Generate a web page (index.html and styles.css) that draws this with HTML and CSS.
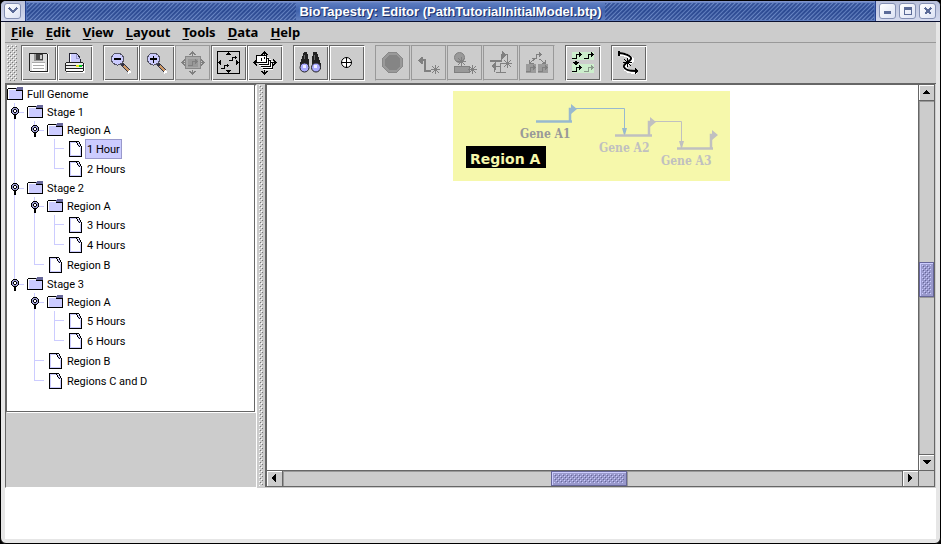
FILE: index.html
```html
<!DOCTYPE html>
<html lang="en">
<head>
<meta charset="utf-8">
<title>BioTapestry: Editor</title>
<link rel="stylesheet" href="styles.css">
</head>
<body>
<svg class="defs" aria-hidden="true">
  <defs>
    <pattern id="bumps" width="4" height="4" patternUnits="userSpaceOnUse">
      <path fill="#fff" d="M0 0h1v1H0zM2 2h1v1H2z"/><path fill="#777" d="M1 1h1v1H1zM3 3h1v1H3z"/>
    </pattern>
    <pattern id="thumb-bumps" width="4" height="4" patternUnits="userSpaceOnUse">
      <path fill="#ccf" d="M0 0h1v1H0zM2 2h1v1H2z"/><path fill="#669" d="M1 1h1v1H1zM3 3h1v1H3z"/>
    </pattern>
    <symbol id="folder" viewBox="0 0 16 14">
      <path fill="#669" d="M10 0h6v3H9V1h1z"/>
      <path fill="#000" d="M1 1h8v1H1zM0 2h1v11H0zM9 3h7v10h-1V4H9zM0 12h16v1H0z"/>
      <path fill="#ccf" d="M2 3h7v1h6v8H2z"/><path fill="#fff" d="M1 2h8v1H2v9H1z"/>
    </symbol>
    <symbol id="file" viewBox="0 0 13 16">
      <path fill="#fff" d="M1 1h7l4 5v9H1z"/>
      <path fill="none" stroke="#ccf" d="M1.500 14.500V1.500H7M2 14.500h9.500V7"/>
      <path fill="#000" d="M0 0h8v1H1v14h11V6h1v10H0z"/>
      <path fill="#ccf" d="M8 1h1v1h1v1h1v1h1v2H9V3H8z"/>
      <path fill="#000" d="M7 1h1v1H7zM8 2h1v2H8zM9 4h1v1H9zM10 5h1v1h-1zM8 0h2v1H8zM10 1h1v2h-1zM11 3h1v2h-1zM12 5h1v2h-1z"/>
    </symbol>
    <symbol id="handle" viewBox="0 0 8 12">
      <path fill="#000" d="M2 0h4v1h1v1h1v4H7v1H6v1H5v4H3V8H2V7H1V6H0V2h1V1h1z"/>
      <path fill="#99c" d="M2 1h4v1h1v4H6v1H2V6H1V2h1z"/><path fill="#000" d="M3 2h2v1h1v2H5v1H3V5H2V3h1z"/><path fill="#fff" d="M3 3h2v2H3z"/>
    </symbol>
    <symbol id="star" viewBox="0 0 9 9">
      <path fill="currentColor" d="M4 0h1v9H4zM0 4h9v1H0zM3 3h3v3H3zM1 1h1v1H1zM2 2h1v1H2zM6 6h1v1H6zM7 7h1v1H7zM7 1h1v1H7zM6 2h1v1H6zM2 6h1v1H2zM1 7h1v1H1z"/>
    </symbol>
    <symbol id="gene" viewBox="0 0 10 8">
      <path fill="currentColor" d="M0 6h4V2h3V0h1v1h1v1h1v1H9v1H8v1H7V3H5v4H0z"/>
    </symbol>
    <symbol id="tips" viewBox="0 0 24 24">
      <path fill="currentColor" d="M11 0h1v1h1v1h1v1h1v1h-2V3h-1v2h-1V3h-1v1H8V3h1V2h1V1h1zM11 24h1v-1h1v-1h1v-1h1v-1h-2v1h-1v-2h-1v2h-1v-1H8v1h1v1h1v1h1zM0 11v1h1v1h1v1h1v1h1v-2H3v-1h2v-1H3v-1h1V8H3v1H2v1H1v1zM24 11v1h-1v1h-1v1h-1v1h-1v-2h1v-1h-2v-1h2v-1h-1V8h1v1h1v1h1v1z"/>
    </symbol>
    <symbol id="lens" viewBox="0 0 24 24">
      <path stroke="#fff" stroke-width="3" d="M15 15l6 7"/>
      <path stroke="#334" stroke-width="4" d="M13 13l7 7"/>
      <path stroke="#c96" stroke-width="2" d="M15 15l5 5"/>
      <circle cx="8.500" cy="8" r="6" fill="#ccf" stroke="#556"/>
    </symbol>
  </defs>
</svg>
<div class="window">
  <header class="titlebar">
    <div class="corner"><button class="win-btn" aria-label="Window menu"><svg width="10" height="8"><path d="M1 1l4 4 4-4" fill="none" stroke="#5b6b98" stroke-width="2"/></svg></button></div>
    <div class="hatch"></div>
    <h1 class="title">BioTapestry: Editor (PathTutorialInitialModel.btp)</h1>
    <div class="hatch"></div>
    <div class="corner">
      <button class="win-btn" aria-label="Minimize"><svg width="10" height="8"><path fill="#5b6b98" d="M1 4h7v3H1z"/></svg></button>
      <button class="win-btn" aria-label="Maximize"><svg width="10" height="8"><path fill="#5b6b98" fill-rule="evenodd" d="M1 0h8v8H1zM2 3v4h6V3z"/></svg></button>
      <button class="win-btn" aria-label="Close"><svg width="10" height="8"><path d="M2 1l6 6M8 1L2 7" stroke="#5b6b98" stroke-width="2"/></svg></button>
    </div>
  </header>

  <div class="content">
    <nav class="menubar">
      <button><u>F</u>ile</button><button><u>E</u>dit</button><button><u>V</u>iew</button><button><u>L</u>ayout</button><button><u>T</u>ools</button><button><u>D</u>ata</button><button><u>H</u>elp</button>
    </nav>

    <div class="toolbar" role="toolbar">
      <svg class="grip" aria-hidden="true"><rect width="100%" height="100%" fill="url(#bumps)"/></svg>
      <div class="group">
        <button class="tool" aria-label="Save"><svg viewBox="0 0 24 24">
          <path fill="#fff" d="M3 3h19v19H3z"/><path fill="#222" d="M2 2h18v1h1v18H3v-1H2z"/><path fill="#ddd" d="M3 3h17v17H3z"/>
          <path fill="#999" d="M7 3h9v7H7z"/><path fill="#444" d="M9 3h7v6H9z"/><path fill="#ccc" d="M13 4h2v4h-2z"/>
          <path fill="#fff" d="M5 12h13v8H5z"/><path fill="#aaa" d="M5 11h13v1H5zM6 14h11v1H6zM6 17h11v1H6z"/></svg></button>
        <button class="tool" aria-label="Print"><svg viewBox="0 0 24 24">
          <path fill="#fff" d="M4 13h18v9H4z"/><path fill="#ccf" stroke="#223" d="M6.500 12.500V2.500h7c3 2 4 6 4 10z"/><path fill="#fff" d="M7 3h1v9H7z"/><path fill="none" stroke="#99c" d="M13.500 3v4h3"/>
          <path fill="#222" d="M3 11h17v1h1v8h-1v1H3v-1H2v-8h1z"/><path fill="#eee" d="M3 12h17v2H3zM3 15h17v2H3z"/><path fill="#fff" d="M3 18h17v2H3z"/><path fill="#eee820" d="M13 14h3v2h-3z"/><path fill="#0c2" d="M16 14h3v2h-3z"/></svg></button>
      </div>
      <div class="group">
        <button class="tool" aria-label="Zoom out"><svg viewBox="0 0 24 24"><use href="#lens"/><path fill="#000" d="M5 7h7v2H5z"/></svg></button>
        <button class="tool" aria-label="Zoom in"><svg viewBox="0 0 24 24"><use href="#lens"/><path fill="#000" d="M5 7h7v2H5zM8 5h1v7H8z"/></svg></button>
        <button class="tool" aria-label="Zoom to selected" disabled><svg viewBox="0 0 24 24"><use href="#tips"/><path fill="#aaa" stroke="#888" d="M4.500 5.500h15v12h-15z"/><path fill="#999" d="M7 8h10v8H7z"/><use href="#gene" x="7" y="8" width="10" height="8"/></svg></button>
        <button class="tool" aria-label="Zoom to model"><svg viewBox="0 0 24 24"><path fill="#ccc" stroke="#000" d="M.5.500h22v22H.5z"/><path fill="#000" d="M11 1h1v1h1v1h1v1H9V3h1V2h1zM11 22h1v-1h1v-1h1v-1H9v1h1v1h1zM1 11v1h1v1h1v1h1V9H3v1H2v1zM22 11v1h-1v1h-1v1h-1V9h1v1h1v1z"/><use href="#gene" x="12" y="4" width="8" height="7"/><use href="#gene" x="4" y="12" width="8" height="7"/></svg></button>
        <button class="tool" aria-label="Zoom to all models"><svg viewBox="0 0 24 24"><use href="#tips"/><path fill="#fff" d="M3 4h11v2h2v2h2v2h2v9h-10v-2H8v-2H6v-3H3z"/><path fill="none" stroke="#000" d="M3.500 4.500h10v7h-10zM14 7.500h1.500v6H6M16 9.500h1.500v6H8M18 11.500h1.500v6H10"/><use href="#gene" x="5" y="5" width="8" height="6"/></svg></button>
      </div>
      <div class="group">
        <button class="tool" aria-label="Search"><svg viewBox="0 0 24 24">
          <path fill="#222" d="M5 1h3l2 9v8H1v-5zM14 1h4l4 12v5h-9v-8z"/><path fill="#666" d="M5 4h1v4H5zM15 4h1v5h-1z"/>
          <circle cx="5.500" cy="16.500" r="4.500" fill="#aaf" stroke="#222"/><circle cx="17" cy="16.500" r="4.500" fill="#aaf" stroke="#222"/><path fill="#eef" d="M4 14h3v3H4zM15 14h3v3h-3z"/></svg></button>
        <button class="tool" aria-label="Center on target"><svg viewBox="0 0 24 24"><circle cx="11.500" cy="11.500" r="5" fill="#fff" stroke="#000"/><path stroke="#000" d="M6 11.500h11M11.500 6v11"/></svg></button>
      </div>
      <div class="group">
        <button class="tool" aria-label="Stop" disabled><svg viewBox="0 0 24 24"><path fill="#999" stroke="#888" d="M7.500 1.500h8l6 6v8l-6 6h-8l-6-6v-8z"/><path fill="#858585" d="M8 4h7l4 4v7l-4 4H8l-4-4V8z"/></svg></button>
        <button class="tool" aria-label="Add gene link" disabled><svg viewBox="0 0 24 24"><path fill="currentColor" d="M1 9h1V8h1V7h1V6h2v2h3v11h5v2H7V10H6v3H4v-1H3v-1H2v-1H1z"/><use href="#star" x="14" y="14" width="9" height="9"/></svg></button>
        <button class="tool" aria-label="Add node" disabled><svg viewBox="0 0 24 24"><circle cx="6.500" cy="6.500" r="5" fill="#999" stroke="#808080"/><path fill="#999" stroke="#808080" d="M1.500 15.500h15v6h-15z"/><use href="#star" x="4" y="6" width="9" height="9"/><use href="#star" x="15" y="14" width="9" height="9"/></svg></button>
        <button class="tool" aria-label="Add gene" disabled><svg viewBox="0 0 24 24"><path fill="none" stroke="currentColor" d="M12.500 9V3.500h6V10M5.500 21v-6h5M7 21.500h10M11.500 21v-9h5"/><path fill="currentColor" d="M13 0l4 4-4 4zM2 15l5-4v8zM1 9h12v2H1z"/><use href="#star" x="14" y="8" width="9" height="9"/></svg></button>
        <button class="tool" aria-label="Add submodel" disabled><svg viewBox="0 0 24 24"><path fill="#9b9b9b" d="M1 13h10v9H1zM13 13h10v9H13z"/><use href="#gene" x="7" y="1" width="10" height="8"/><path fill="none" stroke="currentColor" d="M9.500 8L5 12M14.500 8l5 4M4.500 9v3h4M20.500 9v3h-4"/><use href="#gene" x="1" y="14" width="10" height="8"/><use href="#gene" x="13" y="14" width="10" height="8"/></svg></button>
      </div>
      <div class="group">
        <button class="tool" aria-label="Propagate down"><svg viewBox="0 0 24 24"><path fill="#cec" d="M1 1h22v8H1zM1 13h22v9H1z"/><use href="#gene" x="1" y="1" width="10" height="8"/><use href="#gene" x="13" y="1" width="10" height="8"/><use href="#gene" x="1" y="14" width="10" height="8"/><path fill="#000" d="M4 10h2v1h2v1H7v1H6v1H4v-1H3v-1H2v-1h2z"/><use class="dim" href="#gene" x="13" y="14" width="10" height="8"/></svg></button>
      </div>
      <div class="group">
        <button class="tool" aria-label="Relayout link"><svg viewBox="0 0 24 24"><path fill="none" stroke="#fff" stroke-width="4" d="M3 3c5 0 12 3 12 6s-9 4-7 8c1 3 6 4 12 4"/><path class="smooth" fill="none" stroke="#000" stroke-width="2" d="M2 2c5 0 13 3 12 6s-8 4-7 8c1 3 6 4 12 4"/><path fill="#000" d="M1 0h2v5H1zM18 17l4 3-4 3z"/><use href="#star" x="6" y="7" width="9" height="9"/></svg></button>
      </div>
    </div>

    <main class="split">
      <aside class="sidebar">
        <div class="tree-pane">
          <div class="row root"><svg class="folder"><use href="#folder"/></svg><span>Full Genome</span></div>
          <ul class="tree">
            <li><div class="row"><svg class="handle"><use href="#handle"/></svg><svg class="folder"><use href="#folder"/></svg><span>Stage 1</span></div>
              <ul>
                <li><div class="row"><svg class="handle"><use href="#handle"/></svg><svg class="folder"><use href="#folder"/></svg><span>Region A</span></div>
                  <ul>
                    <li><div class="row leaf"><svg class="file"><use href="#file"/></svg><span class="selected">1 Hour</span></div></li>
                    <li><div class="row leaf"><svg class="file"><use href="#file"/></svg><span>2 Hours</span></div></li>
                  </ul></li>
              </ul></li>
            <li><div class="row"><svg class="handle"><use href="#handle"/></svg><svg class="folder"><use href="#folder"/></svg><span>Stage 2</span></div>
              <ul>
                <li><div class="row"><svg class="handle"><use href="#handle"/></svg><svg class="folder"><use href="#folder"/></svg><span>Region A</span></div>
                  <ul>
                    <li><div class="row leaf"><svg class="file"><use href="#file"/></svg><span>3 Hours</span></div></li>
                    <li><div class="row leaf"><svg class="file"><use href="#file"/></svg><span>4 Hours</span></div></li>
                  </ul></li>
                <li><div class="row leaf"><svg class="file"><use href="#file"/></svg><span>Region B</span></div></li>
              </ul></li>
            <li><div class="row"><svg class="handle"><use href="#handle"/></svg><svg class="folder"><use href="#folder"/></svg><span>Stage 3</span></div>
              <ul>
                <li><div class="row"><svg class="handle"><use href="#handle"/></svg><svg class="folder"><use href="#folder"/></svg><span>Region A</span></div>
                  <ul>
                    <li><div class="row leaf"><svg class="file"><use href="#file"/></svg><span>5 Hours</span></div></li>
                    <li><div class="row leaf"><svg class="file"><use href="#file"/></svg><span>6 Hours</span></div></li>
                  </ul></li>
                <li><div class="row leaf"><svg class="file"><use href="#file"/></svg><span>Region B</span></div></li>
                <li><div class="row leaf"><svg class="file"><use href="#file"/></svg><span>Regions C and D</span></div></li>
              </ul></li>
          </ul>
        </div>
      </aside>
      <div class="divider"><svg aria-hidden="true"><rect width="100%" height="100%" fill="url(#bumps)"/></svg></div>
      <section class="canvas-pane">
        <div class="canvas">
          <svg class="network" width="277" height="90">
            <rect width="277" height="90" fill="#f6f8ab"/>
            <g fill="none" stroke="#98b9cf"><path stroke-width="2.500" d="M83 30.500h36M117 31V18h3"/><path d="M123 17.500h48.500V38"/></g>
            <path fill="#98b9cf" d="M118 13l6 5-6 5zM169 37h5l-2 7h-1z"/>
            <g fill="none" stroke="#c0c0c0"><path stroke-width="2.500" d="M162 44.500h37M196 45V31h3M224 57.500h36M258 58V44h3"/><path d="M202 30.500h26.500V52"/></g>
            <path fill="#c0c0c0" d="M197 26l6 5-6 5zM259 39l6 5-6 5zM226 50h5l-2 7h-1z"/>
            <rect x="13" y="55" width="80" height="22"/>
            <text class="region" x="17" y="73">Region A</text>
            <text class="gene-label active" x="67" y="47">Gene A1</text>
            <text class="gene-label" x="146" y="61">Gene A2</text>
            <text class="gene-label" x="208" y="74">Gene A3</text>
          </svg>
        </div>
        <div class="scroll vertical">
          <button class="arrow" aria-label="Scroll up"><svg width="10" height="5"><path d="M4 0h1v1h1v1h1v1h1v1H1V3h1V2h1V1h1z"/></svg></button>
          <div class="track before"></div>
          <div class="thumb"><svg aria-hidden="true"><rect width="100%" height="100%" fill="url(#thumb-bumps)"/></svg></div>
          <div class="track after"></div>
          <button class="arrow" aria-label="Scroll down"><svg width="10" height="5"><path d="M1 0h8v1H8v1H7v1H6v1H4V3H3V2H2V1H1z"/></svg></button>
        </div>
        <div class="scroll horizontal">
          <button class="arrow" aria-label="Scroll left"><svg width="5" height="9"><path d="M4 0v8H3V7H2V6H1V5H0V3h1V2h1V1h1V0z"/></svg></button>
          <div class="track before"></div>
          <div class="thumb"><svg aria-hidden="true"><rect width="100%" height="100%" fill="url(#thumb-bumps)"/></svg></div>
          <div class="track after"></div>
          <button class="arrow" aria-label="Scroll right"><svg width="5" height="9"><path d="M0 0v8h1V7h1V6h1V5h1V3H3V2H2V1H1V0z"/></svg></button>
        </div>
        <div class="scroll-corner"></div>
      </section>
    </main>
    <footer class="message-area"></footer>
  </div>
</div>
</body>
</html>
```
FILE: styles.css
```css
* { box-sizing: border-box; }
html, body { height: 100%; margin: 0; background: #000; }
body { font-family: "Noto Sans", sans-serif; }
svg { display: block; flex: none; shape-rendering: crispEdges; }
button { margin: 0; padding: 0; border: 0; background: none; font: inherit; color: inherit; }
ul { list-style: none; margin: 0; padding: 0; }
.defs { position: absolute; width: 0; height: 0; }

.window {
  height: 100vh;
  display: flex;
  flex-direction: column;
  border: 1px solid #000;
  border-radius: 6px;
  overflow: hidden;
  background: #e6e6e6;
}

/* Title bar */
.titlebar {
  flex: none;
  display: flex;
  height: 21px;
  border-bottom: 1px solid #0a1030;
  background: linear-gradient(#8c9cd0 0, #5c7cc0 2px, #4163ac 10px, #6482c2 100%);
}
.corner {
  display: flex;
  align-items: center;
  gap: 3px;
  padding: 0 4px 0 3px;
  background: linear-gradient(#b9c0da, #d4daee);
  border-right: 1px solid #26408c;
}
.corner:last-child { border-right: 0; border-left: 1px solid #26408c; }
.win-btn {
  display: flex;
  align-items: center;
  justify-content: center;
  width: 17px;
  height: 16px;
  border: 1px solid #8490b4;
  border-radius: 3px;
  background: linear-gradient(135deg, #fff, #dce2f4);
}
.hatch {
  flex: 1;
  margin: 2px 1px 1px;
  background: repeating-linear-gradient(135deg, rgba(30, 58, 130, .6) 0, rgba(30, 58, 130, .6) 1px, rgba(140, 165, 215, .4) 2px, rgba(30, 58, 130, .6) 3px);
}
.title {
  margin: 0;
  padding: 0 2px;
  font-family: "Liberation Sans", sans-serif;
  font-size: 13px;
  line-height: 21px;
  font-weight: 700;
  color: #fff;
  text-shadow: 1px 1px 0 #1c3068;
  white-space: nowrap;
}

/* Menu and tool bars */
.content {
  flex: 1;
  min-height: 0;
  display: flex;
  flex-direction: column;
  margin: 0 4px 4px;
  background: #ccc;
}
.menubar {
  display: flex;
  gap: 12px;
  height: 21px;
  padding: 0 6px;
  border-bottom: 1px solid #999;
  font-size: 13px;
  line-height: 20px;
  font-weight: 700;
}
.menubar u { text-decoration-thickness: 1px; text-underline-offset: 2px; }
.toolbar {
  display: flex;
  gap: 10px;
  height: 40px;
  padding: 2px;
}
.grip { width: 10px; height: 36px; margin-right: -6px; }
.group { display: flex; }
.tool {
  display: flex;
  width: 36px;
  height: 36px;
  padding: 5px;
  border: 1px solid #666;
  border-right-color: #fff;
  border-bottom-color: #fff;
  box-shadow: inset 1px 1px #fff, inset -1px -1px #666;
  color: #000;
}
.tool:disabled { border-color: #999 #ccc #ccc #999; box-shadow: inset -1px -1px #999; color: #808080; }
.tool svg { width: 24px; height: 24px; }
.tool circle, .smooth { shape-rendering: auto; }
.dim { color: #8a9a8a; }

/* Split view */
.split {
  flex: 1;
  min-height: 0;
  display: flex;
  border-top: 1px solid #666;
}
.sidebar {
  flex: 0 0 252px;
  border: 1px solid #666;
  border-right-color: #fff;
  border-bottom-color: #fff;
}
.tree-pane {
  padding-bottom: 20px;
  border: solid #666;
  border-width: 0 1px 1px;
  margin-right: 1px;
  background: #fff;
  box-shadow: 1px 1px #fff;
  font-family: Roboto, sans-serif;
  font-size: 11px;
}
.tree { padding-left: 20px; }
.tree ul { padding-left: 20px; }
.tree li { position: relative; }
.tree li::before {
  content: "";
  position: absolute;
  left: -13px;
  top: 0;
  bottom: 0;
  border-left: 1px solid #ccf;
}
.tree li:last-child::before { bottom: auto; height: 10px; }
.row { position: relative; display: flex; align-items: center; height: 18px; gap: 2px; }
.row.leaf { height: 20px; padding-left: 2px; gap: 3px; }
.tree .row::before {
  content: "";
  position: absolute;
  left: -13px;
  top: 9px;
  width: 10px;
  border-top: 1px solid #ccf;
}
.row span { padding: 2px 2px 0; line-height: 18px; white-space: nowrap; }
.row .selected { background: #ccf; box-shadow: inset 0 0 0 1px #99c; }
.folder { width: 16px; height: 14px; }
.file { width: 13px; height: 16px; }
.handle { position: absolute; left: -16px; top: 4px; width: 8px; height: 12px; }
.divider { flex: 0 0 8px; padding: 1px 2px 2px; }
.divider svg { width: 4px; height: 100%; }

/* Drawing area with scroll bars */
.canvas-pane {
  flex: 1;
  min-width: 0;
  display: grid;
  grid-template-columns: 1fr 17px;
  grid-template-rows: 1fr 17px;
  margin: 0 1px 1px 0;
  border: solid #666;
  border-width: 1px 0 0 2px;
}
.canvas { position: relative; min-height: 0; overflow: hidden; background: #fff; }
.network { position: absolute; left: 186px; top: 6px; }
.network path { shape-rendering: auto; }
.gene-label { font: bold 12px "DejaVu Serif Condensed", "DejaVu Serif", serif; fill: #c0c0c0; }
.gene-label.active { fill: #999; }
.region { font: bold 14px "DejaVu Sans", sans-serif; fill: #f6f8ab; }
.scroll { display: flex; min-width: 0; min-height: 0; border: 1px solid #666; }
.vertical { flex-direction: column; border-top: 0; border-bottom: 0; }
.horizontal { border-right: 0; border-left: 0; }
.arrow {
  flex: 0 0 16px;
  display: flex;
  align-items: center;
  justify-content: center;
  box-shadow: inset 1px 1px #fff;
}
.vertical .arrow:first-child { border-bottom: 1px solid #666; }
.vertical .arrow:last-child { border-top: 1px solid #666; }
.horizontal .arrow:first-child { border-right: 1px solid #666; }
.horizontal .arrow:last-child { border-left: 1px solid #666; }
.track { box-shadow: inset 1px 1px #999; }
.vertical .before { flex: 161; }
.vertical .after { flex: 158; }
.vertical .thumb { flex: 0 0 35px; }
.horizontal .before { flex: 268; }
.horizontal .after { flex: 275; }
.horizontal .thumb { flex: 0 0 76px; }
.thumb {
  display: flex;
  min-width: 0;
  min-height: 0;
  padding: 2px;
  border: 1px solid #669;
  background: #99c;
  box-shadow: inset 1px 1px #ccf;
}
.thumb svg { flex: 1; width: 100%; height: auto; min-height: 0; }
.scroll-corner { border: 1px solid #666; }
.message-area { flex: 0 0 51px; background: #fff; }
```
